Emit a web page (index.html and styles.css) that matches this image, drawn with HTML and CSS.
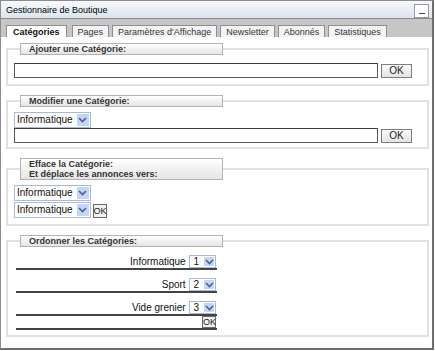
FILE: index.html
```html
<!DOCTYPE html>
<html>
	<head>
		<meta charset="utf-8">
		<title>Gestionnaire de Boutique</title>
		<link rel="stylesheet" href="styles.css">
	</head>
	<body>

		<div class="window">

			<div class="title-bar">
				<span class="title">Gestionnaire de Boutique</span>
				<span class="minimize"><span class="minimize-line"></span></span>
			</div>

			<div class="tab-bar">
				<a class="tab tab-active">Catégories</a>
				<a class="tab">Pages</a>
				<a class="tab">Paramètres d'Affichage</a>
				<a class="tab">Newsletter</a>
				<a class="tab">Abonnés</a>
				<a class="tab">Statistiques</a>
			</div>

			<div class="panel">

				<!-- ajouter -->
				<fieldset class="box box-add">
					<legend class="box-title">Ajouter une Catégorie:</legend>
					<div class="line">
						<input class="text-field" type="text">
						<button class="btn">OK</button>
					</div>
				</fieldset>

				<!-- modifier -->
				<fieldset class="box box-edit">
					<legend class="box-title">Modifier une Catégorie:</legend>
					<span class="pick">
						<span class="pick-value">Informatique</span>
						<span class="pick-arrow"><svg width="9" height="6" viewBox="0 0 9 6"><path d="M1 1 L4.5 4.5 L8 1" fill="none" stroke="#4a5f8c" stroke-width="1.6"/></svg></span>
					</span>
					<div class="line">
						<input class="text-field" type="text">
						<button class="btn">OK</button>
					</div>
				</fieldset>

				<!-- effacer -->
				<fieldset class="box box-delete">
					<legend class="box-title">Efface la Catégorie:<br>Et déplace les annonces vers:</legend>
					<div class="pick-row">
						<span class="pick">
							<span class="pick-value">Informatique</span>
							<span class="pick-arrow"><svg width="9" height="6" viewBox="0 0 9 6"><path d="M1 1 L4.5 4.5 L8 1" fill="none" stroke="#4a5f8c" stroke-width="1.6"/></svg></span>
						</span>
					</div>
					<div class="pick-row">
						<span class="pick">
							<span class="pick-value">Informatique</span>
							<span class="pick-arrow"><svg width="9" height="6" viewBox="0 0 9 6"><path d="M1 1 L4.5 4.5 L8 1" fill="none" stroke="#4a5f8c" stroke-width="1.6"/></svg></span>
						</span>
						<button class="btn-small">OK</button>
					</div>
				</fieldset>

				<!-- ordonner -->
				<fieldset class="box box-order">
					<legend class="box-title">Ordonner les Catégories:</legend>
					<table class="order">
						<tr>
							<td>Informatique
								<span class="pick pick-num">
									<span class="pick-value">1</span>
									<span class="pick-arrow"><svg width="9" height="6" viewBox="0 0 9 6"><path d="M1 1 L4.5 4.5 L8 1" fill="none" stroke="#4a5f8c" stroke-width="1.6"/></svg></span>
								</span>
							</td>
						</tr>
						<tr>
							<td>Sport
								<span class="pick pick-num">
									<span class="pick-value">2</span>
									<span class="pick-arrow"><svg width="9" height="6" viewBox="0 0 9 6"><path d="M1 1 L4.5 4.5 L8 1" fill="none" stroke="#4a5f8c" stroke-width="1.6"/></svg></span>
								</span>
							</td>
						</tr>
						<tr>
							<td>Vide grenier
								<span class="pick pick-num">
									<span class="pick-value">3</span>
									<span class="pick-arrow"><svg width="9" height="6" viewBox="0 0 9 6"><path d="M1 1 L4.5 4.5 L8 1" fill="none" stroke="#4a5f8c" stroke-width="1.6"/></svg></span>
								</span>
							</td>
						</tr>
						<tr>
							<td class="order-ok"><button class="btn-small btn-tiny">OK</button></td>
						</tr>
					</table>
				</fieldset>

			</div>
		</div>

	</body>
</html>
```

FILE: styles.css
```css
body{
	margin: 0;
	background: #fff;
	font-family: "Liberation Sans", Arial, sans-serif;
	color: #222;
}
.window{
	width: 431px;
	height: 347px;
	border: 1px solid #8c8c8c;
	border-right: 2px solid #6e6e6e;
	border-bottom: 2px solid #6e6e6e;
	display: flex;
	flex-direction: column;
	background: #fff;
	overflow: hidden;
}

/* barre de titre */
.title-bar{
	flex-shrink: 0;
	height: 17px;
	display: flex;
	align-items: center;
	justify-content: space-between;
	padding: 0 3px 0 5px;
	background: linear-gradient(#f7f9fc, #dce4ed);
	border-bottom: 1px solid #8c8c8c;
}
.title{
	font-size: 9px;
	color: #000;
}
.minimize{
	display: flex;
	align-items: flex-end;
	justify-content: center;
	box-sizing: border-box;
	width: 15px;
	height: 14px;
	margin-top: 2px;
	border: 1px solid #9a9a9a;
	background: #fff;
	padding-bottom: 3px;
}
.minimize-line{
	width: 6px;
	height: 1px;
	background: #444;
}

/* onglets */
.tab-bar{
	flex-shrink: 0;
	height: 18px;
	display: flex;
	align-items: flex-end;
	gap: 3px;
	padding-left: 5px;
	background: #c6c6c6;
}
.tab{
	height: 11px;
	line-height: 12px;
	padding: 0 5px;
	font-size: 9px;
	color: #333;
	background: #f3f3f3;
	border: 1px solid #8f8f8f;
	border-bottom: none;
}
.tab-active{
	padding: 0 6px;
	margin-right: 2px;
	font-weight: bold;
	color: #111;
	background: #fff;
}

/* contenu */
.panel{
	flex: 1;
	padding: 6px 3px 0 5px;
}
.box{
	margin: 0 0 9px;
	padding: 8px 6px 6px;
	border: 2px solid #e1e1e1;
	min-width: 0;
}
.box-title{
	box-sizing: border-box;
	width: 203px;
	margin-left: 6px;
	padding: 0 8px;
	line-height: 10px;
	font-size: 9px;
	font-weight: bold;
	color: #333;
	background: linear-gradient(#ffffff, #e4e4e4);
	border: 1px solid #b3b3b3;
}
.box-edit{padding-top: 3px; padding-bottom: 4px;}
.box-delete{padding-top: 5px; padding-bottom: 5px;}
.box-order{padding-top: 0; padding-bottom: 5px;}

.line{
	display: flex;
	align-items: center;
	gap: 3px;
}
.text-field{
	box-sizing: border-box;
	width: 364px;
	height: 15px;
	margin: 0;
	padding: 0;
	border: 1px solid #5a5a5a;
	border-top-color: #3d3d3d;
	background: #fff;
}
.btn{
	box-sizing: border-box;
	width: 31px;
	height: 14px;
	margin: 0;
	padding: 0;
	font-family: inherit;
	font-size: 10px;
	line-height: 12px;
	color: #222;
	background: linear-gradient(#fbfbfb, #e3e3e3);
	border: 1px solid #7d7d7d;
}
.btn-small{
	box-sizing: border-box;
	width: 14px;
	height: 14px;
	margin: 0;
	padding: 0;
	font-family: inherit;
	font-size: 9px;
	line-height: 12px;
	color: #222;
	background: #f0f0f0;
	border: 1px solid #6a6a6a;
}
.btn-tiny{
	height: 12px;
	line-height: 10px;
}

/* listes deroulantes */
.pick{
	box-sizing: border-box;
	display: inline-flex;
	align-items: stretch;
	height: 16px;
	border: 1px solid #a7bbd8;
	background: #fff;
	vertical-align: middle;
}
.pick-value{
	padding: 0 3px 0 2px;
	font-size: 10px;
	line-height: 14px;
	color: #111;
}
.pick-arrow{
	display: flex;
	align-items: center;
	justify-content: center;
	width: 12px;
	margin: 1px;
	background: #c5d5f8;
}
.pick-row{
	display: flex;
	align-items: flex-end;
	gap: 2px;
	margin-bottom: 1px;
}
.pick-num{
	height: 13px;
	margin-left: 1px;
	vertical-align: bottom;
}
.pick-num .pick-value{
	padding: 0 4px 0 3px;
	line-height: 11px;
}
.pick-num .pick-arrow{
	width: 10px;
}

/* ordre */
.order{
	width: 201px;
	margin-left: 2px;
	border-collapse: collapse;
}
.order td{
	height: 13px;
	padding: 8px 1px 0 0;
	text-align: right;
	font-size: 10px;
	line-height: 13px;
	color: #111;
	border-bottom: 2px solid #444;
}
.order .order-ok{
	height: 12px;
	padding: 0 1px 0 0;
	line-height: 0;
}
```
